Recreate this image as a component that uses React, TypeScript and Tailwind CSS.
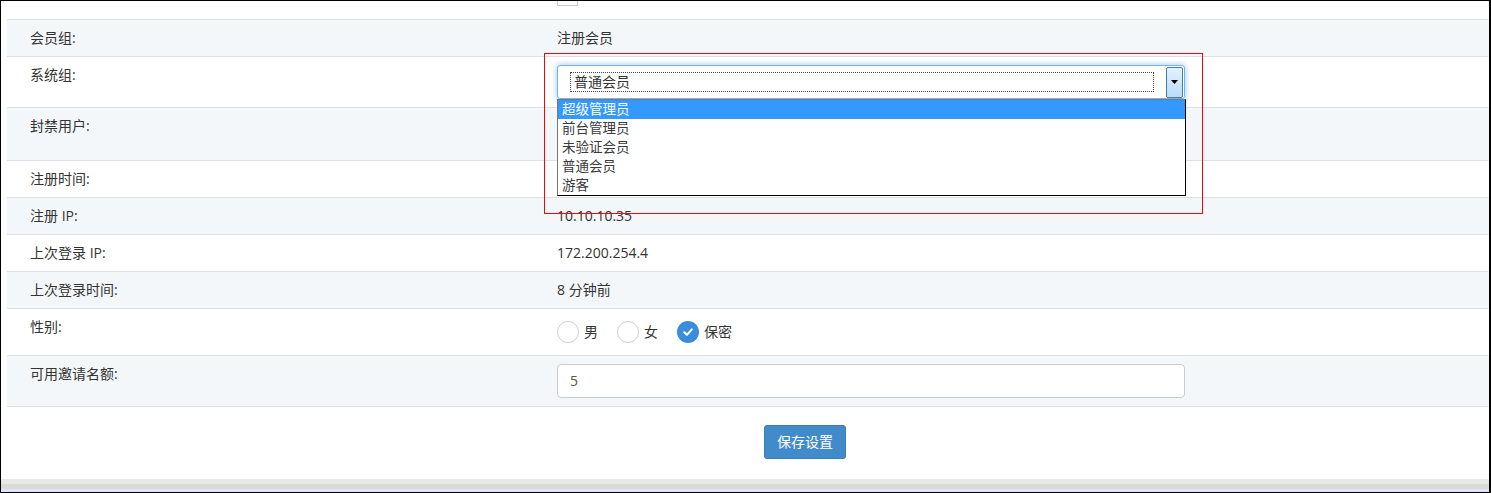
import React from "react";

const rowLight = "bg-[#f4f7fa]";

function Row({
  label,
  light,
  children,
  last,
}: {
  label: string;
  light?: boolean;
  children?: React.ReactNode;
  last?: boolean;
}) {
  return (
    <div
      className={`flex border-t border-[#dcdfe3] ${light ? rowLight : "bg-white"} ${last ? "border-b" : ""}`}
    >
      <div className="w-[550px] shrink-0 pl-[23px] py-2 leading-5">{label}</div>
      <div className="flex-1 py-2 leading-5">{children}</div>
    </div>
  );
}

function Radio({ checked, label }: { checked?: boolean; label: string }) {
  return (
    <div className="flex items-center">
      {checked ? (
        <div className="w-[22px] h-[22px] rounded-full bg-[#3a8ddb] flex items-center justify-center">
          <svg width="12" height="12" viewBox="0 0 12 12">
            <path d="M2.2 6.2 L5 8.8 L9.8 3.4" fill="none" stroke="#fff" strokeWidth="2" strokeLinecap="round" strokeLinejoin="round" />
          </svg>
        </div>
      ) : (
        <div className="w-[22px] h-[22px] rounded-full border border-[#cfcfcf] bg-white" />
      )}
      <span className="ml-[5px]">{label}</span>
    </div>
  );
}

export default function App() {
  return (
    <div className="relative w-[1491px] h-[493px] bg-white border-l border-t border-b border-r-2 border-black overflow-hidden text-[14px] text-[#333] font-['Open_Sans','Noto_Sans_CJK_SC',sans-serif]">
      {/* top partial area */}
      <div className="h-[18px] pl-[556px] overflow-hidden">
        <div className="w-[21px] h-[21px] -mt-[16px] border border-[#c8c8c8] bg-white" />
      </div>

      <div className="ml-[6px]">
        <Row label="会员组:" light>
          注册会员
        </Row>
        <Row label="系统组:">
          <div className="w-[628px] h-[34px] rounded-[3px] border border-[#79b3ea] bg-white shadow-[0_0_6px_rgba(102,175,233,0.7)] flex items-center pl-[12px] pr-[1px]">
            <div className="flex-1 h-[20px] border border-dotted border-[#444] flex items-center pl-[3px] text-[#333] leading-[18px]">
              普通会员
            </div>
            <div className="ml-[12px] w-[17px] h-[31px] border border-[#3c7fb1] rounded-[2px] bg-gradient-to-b from-[#e3f1fe] to-[#bcdcf9] flex items-center justify-center">
              <svg width="7" height="4" viewBox="0 0 7 4">
                <path d="M0 0 H7 L3.5 4 Z" fill="#000" />
              </svg>
            </div>
          </div>
        </Row>
        <Row label="封禁用户:" light>
          <div className="h-[36px]" />
        </Row>
        <Row label="注册时间:">
          <span>&nbsp;</span>
        </Row>
        <Row label="注册 IP:" light>
          10.10.10.35
        </Row>
        <Row label="上次登录 IP:">172.200.254.4</Row>
        <Row label="上次登录时间:" light>
          8 分钟前
        </Row>
        <Row label="性别:">
          <div className="h-[30px] flex items-center gap-[19px]">
            <Radio label="男" />
            <Radio label="女" />
            <Radio label="保密" checked />
          </div>
        </Row>
        <Row label="可用邀请名额:" light last>
          <div className="w-[628px] h-[34px] rounded-[4px] border border-[#cccccc] bg-white flex items-center pl-[12px] text-[#555]">
            5
          </div>
        </Row>

        <div className="h-[72px] pt-[18px] pl-[757px]">
          <button className="w-[82px] h-[34px] rounded-[3px] bg-[#428bca] border border-[#3a7cb8] text-white text-[14px] leading-5">
            保存设置
          </button>
        </div>
      </div>

      <div className="h-[5px] bg-[#e8e8e8]" />
      <div className="h-[5px] bg-[#dadada]" />
      <div className="h-[3px] bg-[#dde7f3]" />

      {/* native dropdown list overlay */}
      <div className="absolute left-[556px] top-[98px] w-[629px] h-[97px] bg-white border border-[#777] border-r-black border-b-black text-[13.5px] leading-[19px] text-[#3a3a3a]">
        <div className="h-[19px] bg-[#3399ff] text-white pl-[4px]">超级管理员</div>
        <div className="h-[19px] pl-[4px]">前台管理员</div>
        <div className="h-[19px] pl-[4px]">未验证会员</div>
        <div className="h-[19px] pl-[4px]">普通会员</div>
        <div className="h-[19px] pl-[4px]">游客</div>
      </div>

      {/* red highlight box */}
      <div className="absolute left-[543px] top-[52px] w-[659px] h-[161px] border border-[#ff0000] pointer-events-none" />
    </div>
  );
}
